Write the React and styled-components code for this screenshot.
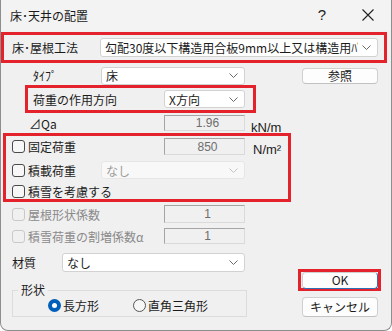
import React from 'react'
import styled, { createGlobalStyle } from 'styled-components'

const GlobalStyle = createGlobalStyle`
  html, body { margin: 0; padding: 0; background: #ffffff; }
  body {
    font-family: "Noto Sans CJK JP", "Noto Sans", sans-serif;
    font-size: 12px;
    color: #1b1b1b;
  }
  * { box-sizing: border-box; }
`

const RED = '#e3222b'

const Window = styled.div`
  width: 392px;
  height: 331px;
  background: #f0f0f0;
  border: 1px solid #8e8e8e;
  border-top: none;
  border-radius: 0 0 8px 8px;
  overflow: hidden;
  display: flex;
  flex-direction: column;
`

const TitleBar = styled.div`
  height: 30px;
  flex: none;
  display: flex;
  align-items: center;
  padding-left: 9px;
  background: #f3f3f3;
  font-size: 12px;
  line-height: 14px;
`

const TitleText = styled.span`
  flex: 1;
  padding-top: 1px;
`

const CaptionButton = styled.div`
  width: 46px;
  height: 30px;
  display: flex;
  align-items: center;
  justify-content: center;
  font-family: "Liberation Sans", sans-serif;
  font-size: 15px;
  color: #222;
`

const Highlight = styled.div`
  border: 3px solid ${RED};
  width: ${p => p.$w}px;
  height: ${p => p.$h}px;
  margin-top: ${p => p.$mt || 0}px;
  margin-left: ${p => p.$ml || 0}px;
  padding-left: ${p => p.$pl || 0}px;
  display: flex;
  flex-direction: ${p => (p.$col ? 'column' : 'row')};
  align-items: ${p => (p.$col ? 'stretch' : 'center')};
  flex: none;
`

const Row = styled.div`
  display: flex;
  align-items: center;
  height: ${p => p.$h}px;
  margin-top: ${p => p.$mt || 0}px;
  padding-left: ${p => p.$pl || 0}px;
  flex: none;
`

const Label = styled.span`
  width: ${p => (p.$w ? `${p.$w}px` : 'auto')};
  flex: none;
  line-height: 15px;
  white-space: nowrap;
  color: ${p => (p.$disabled ? '#8a8a8a' : '#1b1b1b')};
`

const SelectBox = styled.div`
  width: ${p => p.$w}px;
  height: ${p => p.$h || 19}px;
  flex: none;
  display: flex;
  align-items: center;
  padding-left: 4px;
  padding-right: 6px;
  border: 1px solid ${p => (p.$disabled ? '#e6e6e6' : '#d2d2d2')};
  border-radius: 3px;
  background: ${p => (p.$disabled ? '#f8f8f8' : '#ffffff')};
  color: ${p => (p.$disabled ? '#9c9c9c' : '#1b1b1b')};
  overflow: hidden;
`

const SelectText = styled.span`
  flex: 1;
  min-width: 0;
  overflow: hidden;
  white-space: nowrap;
  line-height: 15px;
`

const Chevron = styled.svg`
  flex: none;
  margin-left: 4px;
  width: 9px;
  height: 5px;
`

const Field = styled.div`
  width: 81px;
  height: ${p => p.$h || 17}px;
  flex: none;
  display: flex;
  align-items: center;
  justify-content: center;
  padding-left: 6px;
  background: #f0f0f0;
  border-top: 1px solid #a5a5a5;
  border-left: 1px solid #a5a5a5;
  border-right: 1px solid #dadada;
  border-bottom: 1px solid #dadada;
  font-family: "Liberation Sans Narrow", "Liberation Sans", sans-serif;
  color: #6e6e6e;
  font-size: 12px;
  line-height: 14px;
`

const Unit = styled.span`
  margin-left: ${p => p.$ml}px;
  align-self: flex-end;
  margin-bottom: ${p => p.$mb}px;
  font-family: "Liberation Sans", sans-serif;
  font-size: 13px;
  line-height: 15px;
`

const Check = styled.span`
  width: 13px;
  height: 13px;
  flex: none;
  border: 1px solid ${p => (p.$disabled ? '#c9c9c9' : '#4a4a4a')};
  border-radius: 3px;
  background: ${p => (p.$disabled ? '#f0f0f0' : '#f7f7f7')};
  margin-right: 3px;
`

const Button = styled.div`
  width: 76px;
  height: ${p => p.$h}px;
  flex: none;
  display: flex;
  align-items: center;
  justify-content: center;
  background: #fdfdfd;
  border: 1px solid #d0d0d0;
  border-bottom-color: ${p => (p.$default ? '#2f6fb8' : '#c2c2c2')};
  border-right-color: ${p => (p.$default ? '#2f6fb8' : '#d0d0d0')};
  border-radius: 4px;
  margin-left: ${p => p.$ml || 0}px;
  margin-top: ${p => p.$mt || 0}px;
  line-height: 14px;
  font-size: 12px;
`

const HighlightStack = styled.div`
  display: flex;
  flex-direction: column;
  padding: 2px 0 0 6px;
`

const Bottom = styled.div`
  display: flex;
  margin-top: 9px;
`

const LeftCol = styled.div`
  display: flex;
  flex-direction: column;
`

const RightCol = styled.div`
  display: flex;
  flex-direction: column;
  margin-left: 51px;
  padding-top: 16px;
`

const Group = styled.fieldset`
  margin: 12px 0 0 11px;
  width: 235px;
  height: 33px;
  padding: 0;
  border: 1px solid #dcdcdc;
`

const Legend = styled.legend`
  margin-left: 5px;
  padding: 0 3px;
  line-height: 12px;
  font-size: 12px;
`

const RadioRow = styled.div`
  display: flex;
  align-items: center;
  height: 18px;
  padding-left: 35px;
`

const RadioItem = styled.span`
  display: flex;
  align-items: center;
  margin-right: ${p => p.$mr || 0}px;
  line-height: 15px;
`

const RadioDot = styled.span`
  width: 13px;
  height: 13px;
  border-radius: 50%;
  flex: none;
  margin-right: 2px;
  background: ${p => (p.$on ? '#005fb8' : '#f7f7f7')};
  border: ${p => (p.$on ? 'none' : '1px solid #555')};
  display: flex;
  align-items: center;
  justify-content: center;
  &::after {
    content: '';
    display: ${p => (p.$on ? 'block' : 'none')};
    width: 5px;
    height: 5px;
    border-radius: 50%;
    background: #fff;
  }
`

const Select = ({ w, h, disabled, children }) => (
  <SelectBox $w={w} $h={h} $disabled={disabled}>
    <SelectText>{children}</SelectText>
    <Chevron viewBox="0 0 9 5">
      <path d="M0.5 0.5 L4.5 4.5 L8.5 0.5" fill="none" stroke={disabled ? '#c4c4c4' : '#6a6a6a'} strokeWidth="1" />
    </Chevron>
  </SelectBox>
)

const CloseIcon = () => (
  <svg width="12" height="12" viewBox="0 0 12 12">
    <path d="M0.5 0.5 L11.5 11.5 M11.5 0.5 L0.5 11.5" stroke="#222" strokeWidth="1.1" />
  </svg>
)

export default function App() {
  return (
    <>
      <GlobalStyle />
      <Window>
        <TitleBar>
          <TitleText>床･天井の配置</TitleText>
          <CaptionButton>?</CaptionButton>
          <CaptionButton><CloseIcon /></CaptionButton>
        </TitleBar>

        <Highlight $w={386} $h={31} $mt={2} $pl={8}>
          <Label $w={88}>床･屋根工法</Label>
          <Select w={278}>勾配30度以下構造用合板9mm以上又は構造用ﾊﾟﾈﾙ</Select>
        </Highlight>

        <Row $h={17} $mt={4} $pl={32}>
          <Label $w={68}>ﾀｲﾌﾟ</Label>
          <Select w={144} h={18}>床</Select>
          <Button $h={16} $ml={57}>参照</Button>
        </Row>

        <Highlight $w={231} $h={28} $mt={1} $ml={24} $pl={5}>
          <Label $w={131}>荷重の作用方向</Label>
          <Select w={81} h={18}>X方向</Select>
        </Highlight>

        <Row $h={16} $mt={2} $pl={28}>
          <Label $w={135}>⊿Qa</Label>
          <Field $h={16}>1.96</Field>
          <Unit $ml={6} $mb={-4}>kN/m</Unit>
        </Row>

        <Highlight $w={288} $h={69} $mt={2} $ml={2} $col>
          <HighlightStack>
            <Row $h={17}>
              <Check />
              <Label $w={136}>固定荷重</Label>
              <Field>850</Field>
              <Unit $ml={8} $mb={-2}>N/m²</Unit>
            </Row>
            <Row $h={18} $mt={6}>
              <Check />
              <Label $w={73}>積載荷重</Label>
              <Select w={144} h={18} disabled>なし</Select>
            </Row>
            <Row $h={16} $mt={4}>
              <Check />
              <Label>積雪を考慮する</Label>
            </Row>
          </HighlightStack>
        </Highlight>

        <Row $h={18} $mt={3} $pl={11}>
          <Check $disabled />
          <Label $w={136} $disabled>屋根形状係数</Label>
          <Field $h={18}>1</Field>
        </Row>

        <Row $h={16} $mt={5} $pl={11}>
          <Check $disabled />
          <Label $w={136} $disabled>積雪荷重の割増係数α</Label>
          <Field $h={16}>1</Field>
        </Row>

        <Bottom>
          <LeftCol>
            <Row $h={19} $pl={11}>
              <Label $w={50}>材質</Label>
              <Select w={183}>なし</Select>
            </Row>
            <Group>
              <Legend>形状</Legend>
              <RadioRow>
                <RadioItem $mr={34}>
                  <RadioDot $on />
                  長方形
                </RadioItem>
                <RadioItem>
                  <RadioDot />
                  直角三角形
                </RadioItem>
              </RadioRow>
            </Group>
          </LeftCol>
          <RightCol>
            <Highlight $w={83} $h={22} $pl={1}>
              <Button $h={17} $default>OK</Button>
            </Highlight>
            <Button $h={20} $mt={6} $ml={4}>キャンセル</Button>
          </RightCol>
        </Bottom>
      </Window>
    </>
  )
}
